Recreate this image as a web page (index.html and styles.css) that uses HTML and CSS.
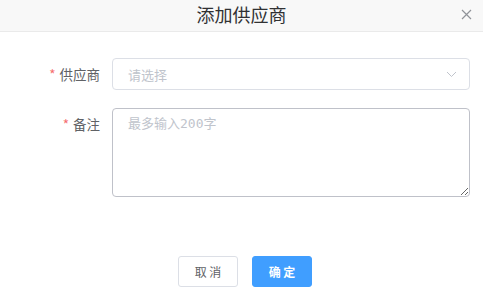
FILE: index.html
```html
<!DOCTYPE html>
<html>
<head>
<meta charset="utf-8">
<link rel="stylesheet" href="styles.css">
</head>
<body>
<div class="dialog">
  <div class="header">
    <span class="title">添加供应商</span>
    <span class="close">
      <svg width="11" height="11" viewBox="0 0 11 11"><path d="M1 1 L10 10 M10 1 L1 10" stroke="#909399" stroke-width="1.2" fill="none"/></svg>
    </span>
  </div>
  <div class="body">
    <div class="form-item">
      <label class="label"><span class="req">*</span>供应商</label>
      <div class="select">
        <span class="placeholder">请选择</span>
        <svg class="arrow" width="11" height="7" viewBox="0 0 11 7"><path d="M1 1 L5.5 5.5 L10 1" stroke="#c0c4cc" stroke-width="1" fill="none"/></svg>
      </div>
    </div>
    <div class="form-item">
      <label class="label"><span class="req">*</span>备注</label>
      <textarea class="textarea" placeholder="最多输入200字"></textarea>
    </div>
  </div>
  <div class="footer">
    <button class="btn">取 消</button>
    <button class="btn primary">确 定</button>
  </div>
</div>
</body>
</html>
```
FILE: styles.css
```css
* { box-sizing: border-box; }
html, body { margin: 0; padding: 0; background: #fff; }
body {
  font-family: "Noto Sans CJK SC", "Liberation Sans", sans-serif;
  color: #606266;
}
.dialog { width: 483px; height: 298px; }
.header {
  position: relative;
  height: 32px;
  background: #f8f8f8;
  border-bottom: 1px solid #eaeaea;
  text-align: center;
}
.title {
  font-size: 18px;
  line-height: 28px;
  color: #303133;
}
.close {
  position: absolute;
  right: 11px;
  top: 9px;
  line-height: 0;
}
.body { padding: 26px 13px 0 0; }
.form-item {
  display: flex;
  align-items: flex-start;
  margin-bottom: 18px;
}
.form-item:last-child { margin-bottom: 0; }
.label {
  width: 112px;
  padding-right: 12px;
  text-align: right;
  font-size: 13.5px;
  line-height: 32px;
  color: #606266;
}
.req { color: #f56c6c; margin-right: 4px; }
.select {
  flex: 1;
  height: 32px;
  border: 1px solid #dcdfe6;
  border-radius: 4px;
  display: flex;
  align-items: center;
  justify-content: space-between;
  padding: 0 12px 0 15px;
}
.placeholder { color: #c0c4cc; font-size: 13px; }
.textarea {
  flex: 1;
  height: 89px;
  border: 1px solid #bfc1c9;
  border-radius: 4px;
  padding: 5px 15px;
  font-family: "DejaVu Sans Mono", "Noto Sans CJK SC", monospace;
  font-size: 13px;
  line-height: 20px;
  resize: vertical;
  margin: 0;
  outline: none;
  display: block;
}
.textarea::placeholder { color: #c0c4cc; }
.footer {
  display: flex;
  justify-content: center;
  gap: 14px;
  padding: 59px 0 0 7px;
}
.btn {
  width: 60px;
  height: 31px;
  border: 1px solid #dcdfe6;
  border-radius: 3px;
  background: #fff;
  color: #606266;
  font-family: "Noto Sans CJK SC", sans-serif;
  font-size: 12px;
  padding: 0;
}
.btn.primary {
  background: #409eff;
  border-color: #409eff;
  color: #fff;
  font-weight: bold;
}
```
